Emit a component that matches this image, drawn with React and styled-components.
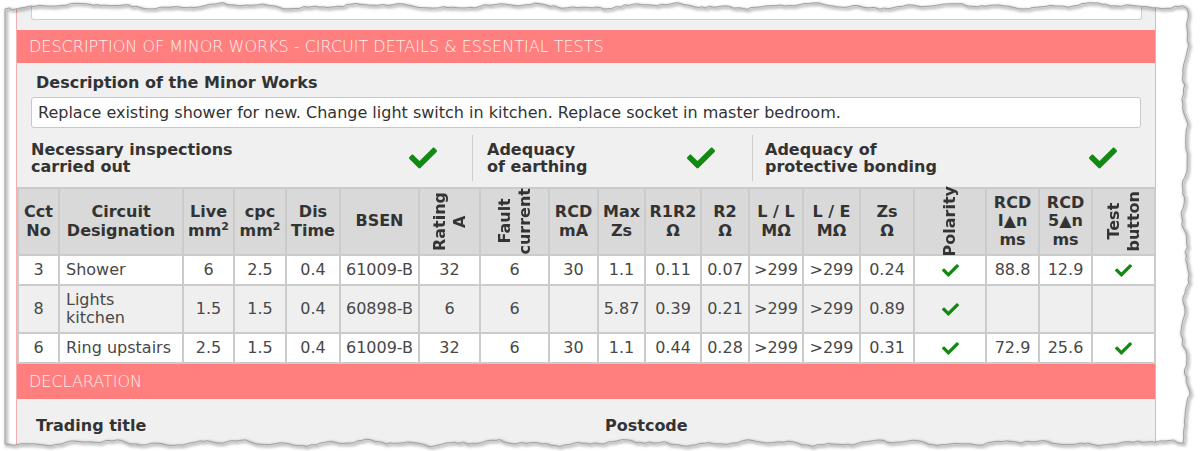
import React from "react";
import styled, { createGlobalStyle } from "styled-components";
import { FaCheck } from "react-icons/fa";

const GlobalStyle = createGlobalStyle`
  html, body { margin: 0; padding: 0; background: #fff; }
  body { font-family: "DejaVu Sans", "Liberation Sans", sans-serif; }
  * { box-sizing: border-box; }
`;

const Page = styled.div`
  position: relative;
  width: 1200px;
  height: 451px;
  overflow: hidden;
  background: #fff;
  padding-left: 16px;
`;

const Panel = styled.div`
  width: 1140px;
  height: 100%;
  background: #f0f0f0;
  border-left: 1px solid #f4aeae;
  border-right: 1px solid #f4aeae;
`;

const TopField = styled.div`
  height: 20px;
  margin: 0 13px 0 14px;
  background: #fff;
  border: 1px solid #cfcfcf;
  border-top: none;
  border-radius: 0 0 3px 3px;
`;

const SectionBar = styled.div`
  margin-top: ${(p) => p.$mt}px;
  height: ${(p) => p.$h}px;
  background: #ff7f7f;
  color: #fff0f0;
  font-family: "DejaVu Sans ExtraLight", "DejaVu Sans", sans-serif;
  font-weight: 200;
  font-size: 16px;
  padding-left: 12px;
  display: flex;
  align-items: center;
  white-space: nowrap;
`;

const FieldLabel = styled.div`
  padding: 10px 19px 0;
  font-weight: bold;
  font-size: 16px;
  line-height: 20px;
  color: #333;
`;

const TextField = styled.div`
  margin: 4px 14px 0;
  height: 31px;
  background: #fff;
  border: 1px solid #c8c8c8;
  border-radius: 3px;
  padding: 0 6px;
  font-size: 16px;
  line-height: 29px;
  color: #333;
  white-space: nowrap;
  overflow: hidden;
`;

const Checks = styled.div`
  margin-top: 5px;
  height: 48px;
  display: grid;
  grid-template-columns: 455px 280px 1fr;
`;

const CheckCell = styled.div`
  display: flex;
  align-items: center;
  justify-content: space-between;
  padding: 0 ${(p) => p.$pr}px 0 ${(p) => p.$pl}px;
  border-left: ${(p) => (p.$sep ? "1px solid #cdcdcd" : "none")};
  margin-top: 2px;
`;

const CheckLabel = styled.div`
  font-weight: bold;
  font-size: 16px;
  line-height: 17px;
  color: #333;
`;

const Tick = styled(FaCheck)`
  color: #138913;
  display: block;
`;

const Grid = styled.table`
  width: 100%;
  margin-top: 6px;
  border-collapse: collapse;
  table-layout: fixed;
  font-size: 16px;
`;

const Th = styled.th`
  background: #d9d9d9;
  border: 2px solid #cbcbcb;
  color: #333;
  font-weight: bold;
  line-height: 18.5px;
  padding: 0;
  text-align: center;
  vertical-align: middle;
  white-space: nowrap;

  sup {
    font-size: 11px;
    line-height: 0;
    vertical-align: 6px;
  }
`;

const HeadBox = styled.div`
  height: 65px;
  display: flex;
  align-items: center;
  justify-content: center;
`;

const Vert = styled.div`
  writing-mode: vertical-rl;
  transform: rotate(180deg);
  line-height: 20px;
  white-space: nowrap;
  text-align: center;
`;

const Tr = styled.tr`
  background: ${(p) => (p.$alt ? "#efefef" : "#fff")};
`;

const Td = styled.td`
  border: 2px solid #cbcbcb;
  padding: 5px ${(p) => (p.$left ? "6px 5px 6px" : "3px")};
  line-height: 18px;
  color: #484848;
  text-align: ${(p) => (p.$left ? "left" : "center")};
  vertical-align: middle;

  svg {
    display: inline-block;
    vertical-align: middle;
  }
`;

const Footer = styled.div`
  display: grid;
  grid-template-columns: 1fr 1fr;
  padding-top: 17px;
`;

const FooterLabel = styled.div`
  padding-left: 19px;
  font-weight: bold;
  font-size: 16px;
  line-height: 20px;
  color: #333;
`;

const Overlay = styled.svg`
  position: absolute;
  left: 0;
  top: 0;
  pointer-events: none;
`;

function rng(seed) {
  return () => {
    seed |= 0;
    seed = (seed + 0x6d2b79f5) | 0;
    let t = Math.imul(seed ^ (seed >>> 15), 1 | seed);
    t = (t + Math.imul(t ^ (t >>> 7), 61 | t)) ^ t;
    return ((t ^ (t >>> 14)) >>> 0) / 4294967296;
  };
}

function tornOutline() {
  const r = rng(7);
  const pts = [];
  const topY = (x) => 6 + 1.8 * Math.sin(x / 23 + 1) + 1.1 * Math.sin(x / 7.3) + (r() - 0.5) * 1.8;
  const rightX = (y) => 1185 + 2.6 * Math.sin(y / 19) + 1.4 * Math.sin(y / 6.1) + (r() - 0.5) * 2.4;
  const botY = (x) => 443 + 1.8 * Math.sin(x / 21) + 1.3 * Math.sin(x / 6.7) + (r() - 0.5) * 1.8;
  pts.push([5, 9]);
  for (let x = 9; x < 1183; x += 3 + r() * 3) pts.push([x, topY(x)]);
  for (let y = 8; y < 442; y += 3 + r() * 3) pts.push([rightX(y), y]);
  for (let x = 1183; x > 7; x -= 3 + r() * 3) pts.push([x, botY(x)]);
  pts.push([5, 444]);
  return "M" + pts.map(([a, b]) => `${a.toFixed(1)},${b.toFixed(1)}`).join(" L") + " Z";
}

const OUTLINE = tornOutline();

function TornPaper() {
  return (
    <Overlay width="1200" height="451" viewBox="0 0 1200 451">
      <defs>
        <filter id="tornBlur" x="-2%" y="-5%" width="104%" height="110%">
          <feGaussianBlur stdDeviation="1.4" />
        </filter>
      </defs>
      <path d={`M0,0 H1200 V451 H0 Z ${OUTLINE}`} fill="#fff" fillRule="evenodd" />
      <path
        d={OUTLINE}
        fill="none"
        stroke="rgba(0,0,0,0.35)"
        strokeWidth="2.4"
        filter="url(#tornBlur)"
        transform="translate(1.5,1.5)"
      />
      <path d={OUTLINE} fill="none" stroke="#9a9a9a" strokeWidth="0.9" />
    </Overlay>
  );
}

const COLS = [41, 124, 51, 52, 54, 79, 61, 69, 49, 47, 56, 48, 54, 57, 54, 72, 53, 53, 63];

const HEADS = [
  ["Cct", "No"],
  ["Circuit", "Designation"],
  ["Live", <>mm<sup>2</sup></>],
  ["cpc", <>mm<sup>2</sup></>],
  ["Dis", "Time"],
  ["BSEN"],
  { vert: ["Rating", "A"] },
  { vert: ["Fault", "current"] },
  ["RCD", "mA"],
  ["Max", "Zs"],
  ["R1R2", "Ω"],
  ["R2", "Ω"],
  ["L / L", "MΩ"],
  ["L / E", "MΩ"],
  ["Zs", "Ω"],
  { vert: ["Polarity"] },
  ["RCD", "I▲n", "ms"],
  ["RCD", "5▲n", "ms"],
  { vert: ["Test", "button"] },
];

const lines = (arr) =>
  arr.map((t, i) => (
    <React.Fragment key={i}>
      {i > 0 && <br />}
      {t}
    </React.Fragment>
  ));

const ROWS = [
  { cct: "3", name: "Shower", live: "6", cpc: "2.5", dis: "0.4", bsen: "61009-B", rating: "32", fault: "6", rcd: "30", maxzs: "1.1", r1r2: "0.11", r2: "0.07", ll: ">299", le: ">299", zs: "0.24", pol: true, i1: "88.8", i5: "12.9", test: true },
  { cct: "8", name: "Lights kitchen", live: "1.5", cpc: "1.5", dis: "0.4", bsen: "60898-B", rating: "6", fault: "6", rcd: "", maxzs: "5.87", r1r2: "0.39", r2: "0.21", ll: ">299", le: ">299", zs: "0.89", pol: true, i1: "", i5: "", test: false },
  { cct: "6", name: "Ring upstairs", live: "2.5", cpc: "1.5", dis: "0.4", bsen: "61009-B", rating: "32", fault: "6", rcd: "30", maxzs: "1.1", r1r2: "0.44", r2: "0.28", ll: ">299", le: ">299", zs: "0.31", pol: true, i1: "72.9", i5: "25.6", test: true },
];

export default function App() {
  return (
    <>
      <GlobalStyle />
      <Page>
        <Panel>
          <TopField />
          <SectionBar $mt={10} $h={33}>
            DESCRIPTION OF MINOR WORKS - CIRCUIT DETAILS &amp; ESSENTIAL TESTS
          </SectionBar>
          <FieldLabel>Description of the Minor Works</FieldLabel>
          <TextField>
            Replace existing shower for new. Change light switch in kitchen. Replace socket in master bedroom.
          </TextField>
          <Checks>
            <CheckCell $pl={14} $pr={35}>
              <CheckLabel>
                Necessary inspections
                <br />
                carried out
              </CheckLabel>
              <Tick size={28} />
            </CheckCell>
            <CheckCell $sep $pl={14} $pr={37}>
              <CheckLabel>
                Adequacy
                <br />
                of earthing
              </CheckLabel>
              <Tick size={28} />
            </CheckCell>
            <CheckCell $sep $pl={12} $pr={38}>
              <CheckLabel>
                Adequacy of
                <br />
                protective bonding
              </CheckLabel>
              <Tick size={28} />
            </CheckCell>
          </Checks>
          <Grid>
            <colgroup>
              {COLS.map((w, i) => (
                <col key={i} style={{ width: w }} />
              ))}
            </colgroup>
            <thead>
              <tr>
                {HEADS.map((h, i) => (
                  <Th key={i}>
                    <HeadBox>
                      {Array.isArray(h) ? <div>{lines(h)}</div> : <Vert>{lines(h.vert)}</Vert>}
                    </HeadBox>
                  </Th>
                ))}
              </tr>
            </thead>
            <tbody>
              {ROWS.map((r, i) => (
                <Tr key={i} $alt={i === 1}>
                  <Td>{r.cct}</Td>
                  <Td $left>{r.name}</Td>
                  <Td>{r.live}</Td>
                  <Td>{r.cpc}</Td>
                  <Td>{r.dis}</Td>
                  <Td>{r.bsen}</Td>
                  <Td>{r.rating}</Td>
                  <Td>{r.fault}</Td>
                  <Td>{r.rcd}</Td>
                  <Td>{r.maxzs}</Td>
                  <Td>{r.r1r2}</Td>
                  <Td>{r.r2}</Td>
                  <Td>{r.ll}</Td>
                  <Td>{r.le}</Td>
                  <Td>{r.zs}</Td>
                  <Td>{r.pol && <Tick size={17} />}</Td>
                  <Td>{r.i1}</Td>
                  <Td>{r.i5}</Td>
                  <Td>{r.test && <Tick size={17} />}</Td>
                </Tr>
              ))}
            </tbody>
          </Grid>
          <SectionBar $mt={0} $h={35}>DECLARATION</SectionBar>
          <Footer>
            <FooterLabel>Trading title</FooterLabel>
            <FooterLabel>Postcode</FooterLabel>
          </Footer>
        </Panel>
        <TornPaper />
      </Page>
    </>
  );
}
